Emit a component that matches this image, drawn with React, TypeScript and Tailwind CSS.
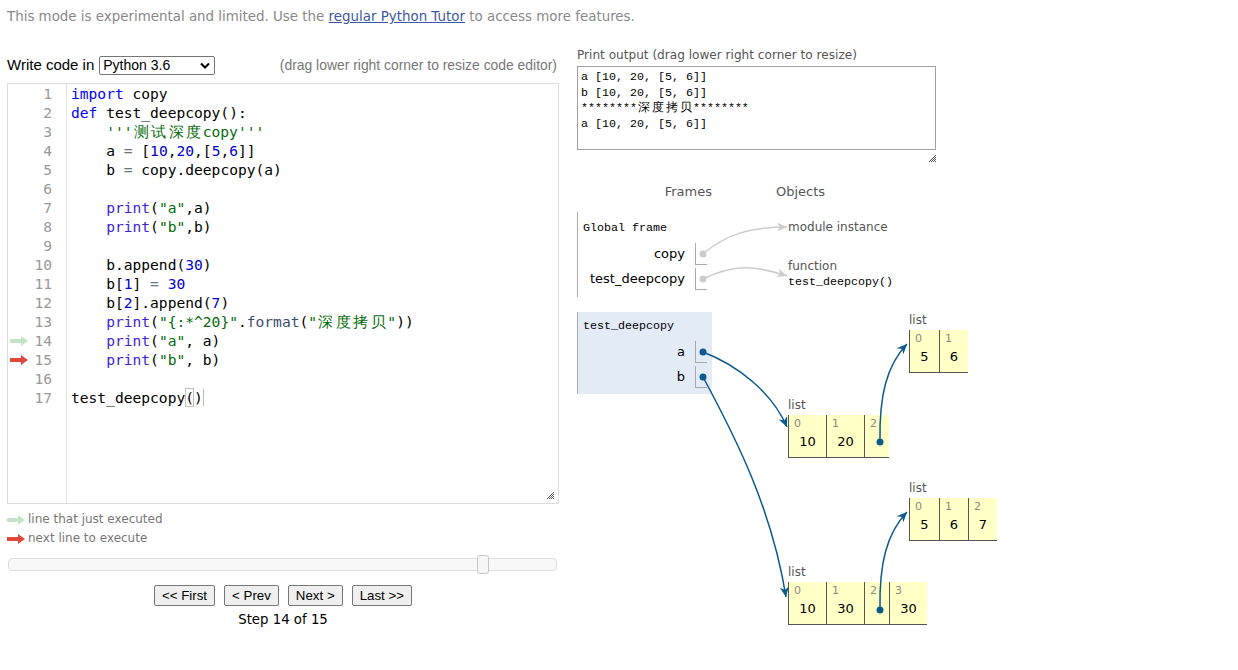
import React from 'react';

type Tok = [string, string?];

const KW = '#0000ff';
const PR = '#3d22dc';
const NUM = '#0000cd';
const STR = '#036a07';
const FN = '#3c4c72';
const OP = '#687687';

const codeLines: Tok[][] = [
  [['import', KW], [' copy']],
  [['def', KW], [' test_deepcopy():']],
  [['    '], ["'''测试深度copy'''", STR]],
  [['    a '], ['=', OP], [' ['], ['10', NUM], [','], ['20', NUM], [',['], ['5', NUM], [','], ['6', NUM], [']]']],
  [['    b '], ['=', OP], [' copy.deepcopy(a)']],
  [],
  [['    '], ['print', PR], ['('], ['"a"', STR], [',a)']],
  [['    '], ['print', PR], ['('], ['"b"', STR], [',b)']],
  [],
  [['    b.append('], ['30', NUM], [')']],
  [['    b['], ['1', NUM], ['] '], ['=', OP], [' '], ['30', NUM]],
  [['    b['], ['2', NUM], ['].append('], ['7', NUM], [')']],
  [['    '], ['print', PR], ['('], ['"{:*^20}"', STR], ['.'], ['format', FN], ['('], ['"深度拷贝"', STR], ['))']],
  [['    '], ['print', PR], ['('], ['"a"', STR], [', a)']],
  [['    '], ['print', PR], ['('], ['"b"', STR], [', b)']],
  [],
];

// CJK glyphs take two columns, as in the editor
const wide = (s: string) =>
  s.split(/([\u4e00-\u9fff])/).map((part, i) =>
    /[\u4e00-\u9fff]/.test(part) ? (
      <span key={i} className="inline-block w-[2ch] text-center">
        {part}
      </span>
    ) : (
      part
    )
  );

const Arrow = ({ color }: { color: string }) => (
  <svg width="18" height="10" viewBox="0 0 18 10">
    <path d="M0 3 H11 V0 L18 5 L11 10 V7 H0 Z" fill={color} />
  </svg>
);

const Grip = () => (
  <svg width="8" height="8" viewBox="0 0 8 8">
    <path d="M8 1 L1 8 M8 3 L3 8 M8 5 L5 8 M8 7 L7 8" stroke="#555" strokeWidth="1" />
  </svg>
);

type Cell = { w: string; i: string; v?: string };

const ListObj = ({ cells, pos }: { cells: Cell[]; pos: string }) => (
  <div className={`absolute ${pos}`}>
    <div className="h-[18px] leading-[16px] text-[12px] text-[#555]">list</div>
    <div className="flex">
      {cells.map((c) => (
        <div key={c.i} className={`${c.w} h-[43px] bg-[#ffffc6] border-l border-b border-[#555]`}>
          <div className="h-[15px] pt-[3px] pl-[5px] leading-[11px] text-[11px] text-[#888]">{c.i}</div>
          <div className="mt-[4px] leading-[16px] text-[13px] text-black text-center">{c.v}</div>
        </div>
      ))}
    </div>
  </div>
);

const VarRow = ({ name, className }: { name: string; className?: string }) => (
  <div className={`flex justify-end items-center h-[22px] pr-[5px] ${className ?? ''}`}>
    <span className="mr-[10px] text-[13px] text-black">{name}</span>
    <div className="w-[12px] h-[22px] border-l border-b border-[#aaa]" />
  </div>
);

const BLUE = '#0b5a8c';

export default function App() {
  return (
    <div className="w-[1238px] h-[670px] overflow-hidden bg-white font-['DejaVu_Sans',sans-serif] text-[#333]">
      <p className="pt-[8px] pl-[7px] text-[13.4px] leading-[17px] text-[#888]">
        This mode is experimental and limited. Use the{' '}
        <span className="text-[#3d58a2] underline">regular Python Tutor</span> to access more features.
      </p>

      <div className="flex items-start mt-[22px]">
        {/* left: editor */}
        <div className="ml-[7px] w-[552px]">
          <div className="mt-[8px] h-[20px] flex items-center justify-between font-['Liberation_Sans',Arial,sans-serif]">
            <div className="flex items-center">
              <span className="text-[15px] text-black mr-[5px]">Write code in</span>
              <div className="w-[116px] h-[19px] border border-[#767676] rounded-[2px] flex items-center justify-between pl-[3px] pr-[4px] bg-white">
                <span className="text-[14px] text-black leading-none">Python 3.6</span>
                <svg width="10" height="7" viewBox="0 0 10 7">
                  <path d="M1 1.5 L5 5.5 L9 1.5" stroke="#000" strokeWidth="2" fill="none" />
                </svg>
              </div>
            </div>
            <span className="text-[13.9px] text-[#777] mr-[2px]">(drag lower right corner to resize code editor)</span>
          </div>

          <div className="relative mt-[8px] h-[421px] border border-[#ddd] flex font-['DejaVu_Sans_Mono',monospace] text-[14.6px] leading-[19px]">
            <div className="w-[59px] border-r border-[#e3e3e3] text-[#999]">
              {Array.from({ length: 17 }, (_, k) => k + 1).map((n) => (
                <div key={n} className="flex items-center h-[19px] pl-[2px] pr-[14px]">
                  {n === 14 && <Arrow color="#c5e4c5" />}
                  {n === 15 && <Arrow color="#e0483b" />}
                  <span className="ml-auto">{n}</span>
                </div>
              ))}
            </div>
            <div className="pl-[4px] text-black whitespace-pre">
              {codeLines.map((line, k) => (
                <div key={k} className="h-[19px]">
                  {line.map(([t, c], j) => (
                    <span key={j} style={c ? { color: c } : undefined}>
                      {wide(t)}
                    </span>
                  ))}
                </div>
              ))}
              <div className="h-[19px] flex items-center">
                <span>test_deepcopy</span>
                <span className="inline-block h-[19px] shadow-[inset_0_0_0_1px_#c0c0c0]">(</span>
                <span>)</span>
                <span className="inline-block w-px h-[17px] bg-[#bbb]" />
              </div>
            </div>
            <div className="absolute right-[4px] bottom-[4px] flex">
              <Grip />
            </div>
          </div>

          <div className="mt-[6px] text-[12px] leading-[19px] text-[#777]">
            <div className="flex items-center gap-[3px]">
              <Arrow color="#c5e4c5" />
              <span>line that just executed</span>
            </div>
            <div className="flex items-center gap-[3px]">
              <Arrow color="#e0483b" />
              <span>next line to execute</span>
            </div>
          </div>

          <div className="relative mt-[10px] ml-[1px] w-[549px] h-[13px] border border-[#dddddd] rounded-[4px] bg-[#f8f8f8]">
            <div className="absolute left-[468px] top-[-4px] w-[12px] h-[19px] border border-[#c5c5c5] rounded-[3px] bg-[#f6f6f6]" />
          </div>

          <div className="mt-[14px] flex justify-center gap-[9px] font-['Liberation_Sans',Arial,sans-serif] text-[13.3px] text-black">
            {['<< First', '< Prev', 'Next >', 'Last >>'].map((b) => (
              <button key={b} className="h-[21px] px-[7px] border border-[#767676] rounded-[2px] bg-[#efefef] leading-none">
                {b}
              </button>
            ))}
          </div>
          <div className="mt-[6px] text-center text-[13.3px] leading-[16px] text-black">Step 14 of 15</div>
        </div>

        {/* right: output and visualization */}
        <div className="ml-[18px]">
          <div className="text-[12.1px] leading-[16px] text-[#555]">Print output (drag lower right corner to resize)</div>
          <div className="mt-[3px] w-[359px] h-[84px] border border-[#a0a0a0] pt-[3px] pl-[3px] font-['Liberation_Mono',monospace] text-[11.67px] leading-[15.6px] text-black whitespace-pre">
            <div>a [10, 20, [5, 6]]</div>
            <div>b [10, 20, [5, 6]]</div>
            <div>{wide('********深度拷贝********')}</div>
            <div>a [10, 20, [5, 6]]</div>
          </div>
          <div className="w-[359px] h-[12px] flex justify-end items-end">
            <Grip />
          </div>

          <div className="relative mt-[8px] w-[660px] h-[470px]">
            <div className="pt-[14px] flex leading-[16px] text-[13px] text-[#555]">
              <span className="w-[135px] text-right">Frames</span>
              <span className="ml-[64px]">Objects</span>
            </div>

            <div className="mt-[12px] w-[135px] h-[85px] border-l border-[#aaa]">
              <div className="pt-[8px] pl-[5px] leading-[16px] font-['Liberation_Mono',monospace] text-[11.67px] text-black">
                Global frame
              </div>
              <VarRow name="copy" className="mt-[7px]" />
              <VarRow name="test_deepcopy" className="mt-[3px]" />
            </div>

            <div className="mt-[15px] w-[135px] h-[82px] bg-[#e2ebf6] border-l border-[#aaa]">
              <div className="pt-[6px] pl-[5px] leading-[16px] font-['Liberation_Mono',monospace] text-[11.67px] text-black">
                test_deepcopy
              </div>
              <VarRow name="a" className="mt-[7px]" />
              <VarRow name="b" className="mt-[3px]" />
            </div>

            {/* heap objects */}
            <div className="absolute left-[211px] top-[49px] leading-[16px] text-[12px] text-[#555]">module instance</div>
            <div className="absolute left-[211px] top-[88px] leading-[16px]">
              <div className="text-[12px] text-[#555]">function</div>
              <div className="font-['Liberation_Mono',monospace] text-[11.67px] text-black">test_deepcopy()</div>
            </div>

            <ListObj
              pos="left-[332px] top-[142px]"
              cells={[
                { w: 'w-[30px]', i: '0', v: '5' },
                { w: 'w-[29px]', i: '1', v: '6' },
              ]}
            />
            <ListObj
              pos="left-[211px] top-[227px]"
              cells={[
                { w: 'w-[38px]', i: '0', v: '10' },
                { w: 'w-[38px]', i: '1', v: '20' },
                { w: 'w-[25px]', i: '2' },
              ]}
            />
            <ListObj
              pos="left-[332px] top-[310px]"
              cells={[
                { w: 'w-[30px]', i: '0', v: '5' },
                { w: 'w-[29px]', i: '1', v: '6' },
                { w: 'w-[29px]', i: '2', v: '7' },
              ]}
            />
            <ListObj
              pos="left-[211px] top-[394px]"
              cells={[
                { w: 'w-[38px]', i: '0', v: '10' },
                { w: 'w-[38px]', i: '1', v: '30' },
                { w: 'w-[25px]', i: '2' },
                { w: 'w-[38px]', i: '3', v: '30' },
              ]}
            />

            {/* pointers */}
            <svg className="absolute inset-0 pointer-events-none" width="660" height="470">
              <defs>
                <marker id="hg" markerWidth="11" markerHeight="9" refX="10" refY="4.5" orient="auto" markerUnits="userSpaceOnUse">
                  <path d="M0 0 L10 4.5 L0 9 L3 4.5 Z" fill="#cccccc" />
                </marker>
                <marker id="hb" markerWidth="11" markerHeight="9" refX="10" refY="4.5" orient="auto" markerUnits="userSpaceOnUse">
                  <path d="M0 0 L10 4.5 L0 9 L3 4.5 Z" fill={BLUE} />
                </marker>
              </defs>
              <path d="M126 84 C148 65, 172 57, 210 57" stroke="#cccccc" strokeWidth="1.5" fill="none" markerEnd="url(#hg)" />
              <path d="M126 109 C158 93, 180 96, 210 106" stroke="#cccccc" strokeWidth="1.5" fill="none" markerEnd="url(#hg)" />
              <circle cx="126" cy="84" r="3.5" fill="#cccccc" />
              <circle cx="126" cy="109" r="3.5" fill="#cccccc" />

              <path d="M126 182 C160 195, 195 222, 210 257" stroke={BLUE} strokeWidth="1.5" fill="none" markerEnd="url(#hb)" />
              <path d="M126 207 C160 270, 195 340, 209 427" stroke={BLUE} strokeWidth="1.5" fill="none" markerEnd="url(#hb)" />
              <path d="M303 272 C302 225, 310 195, 330 174" stroke={BLUE} strokeWidth="1.5" fill="none" markerEnd="url(#hb)" />
              <path d="M303 440 C302 393, 310 363, 330 342" stroke={BLUE} strokeWidth="1.5" fill="none" markerEnd="url(#hb)" />
              <circle cx="126" cy="182" r="3.5" fill={BLUE} />
              <circle cx="126" cy="207" r="3.5" fill={BLUE} />
              <circle cx="303" cy="272" r="3.5" fill={BLUE} />
              <circle cx="303" cy="440" r="3.5" fill={BLUE} />
            </svg>
          </div>
        </div>
      </div>
    </div>
  );
}
